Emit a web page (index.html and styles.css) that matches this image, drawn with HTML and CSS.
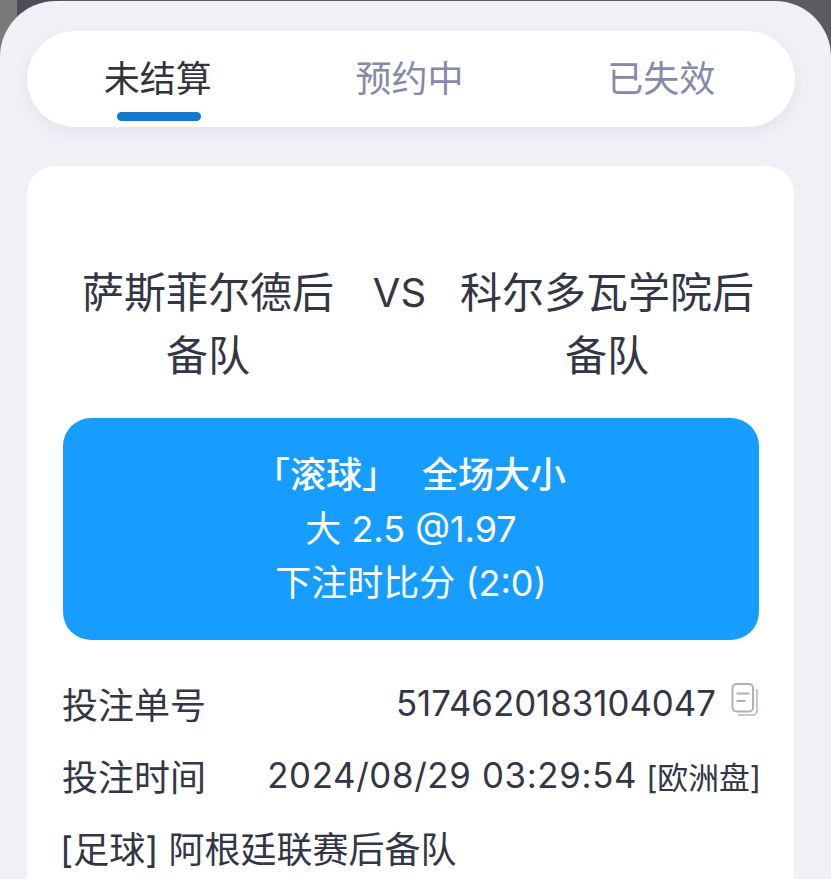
FILE: index.html
```html
<!DOCTYPE html>
<html lang="zh">
<head>
<meta charset="utf-8">
<title>注单</title>
<link rel="stylesheet" href="styles.css">
</head>
<body>
<div class="backdrop"></div>
<main class="sheet">
  <nav class="tabs">
    <div class="tab active">未结算<span class="bar"></span></div>
    <div class="tab">预约中</div>
    <div class="tab">已失效</div>
  </nav>
  <section class="card">
    <div class="teams">
      <div class="team">萨斯菲尔德后备队</div>
      <div class="vs">VS</div>
      <div class="team">科尔多瓦学院后备队</div>
    </div>
    <div class="bet">
      <div class="bet-title"><span>「滚球」</span><span>全场大小</span></div>
      <div>大 2.5 @1.97</div>
      <div>下注时比分 (2:0)</div>
    </div>
    <div class="row">
      <span class="label">投注单号</span>
      <span class="value">5174620183104047<svg class="copy" width="28" height="34" viewBox="0 0 28 34" fill="none"><path d="M26 6V28a4 4 0 0 1-4 4H7" stroke="#c6c9ce" stroke-width="2.200"/><rect x="1.500" y="1" width="20.500" height="27.500" rx="4" stroke="#aeb1b8" stroke-width="2" fill="#fff"/><path d="M5.500 10.500h13M5.500 18h9" stroke="#aeb1b8" stroke-width="1.800"/></svg></span>
    </div>
    <div class="row">
      <span class="label">投注时间</span>
      <span class="value"><span class="time">2024/08/29 03:29:54</span><span class="market">[欧洲盘]</span></span>
    </div>
    <div class="league">[足球] 阿根廷联赛后备队</div>
  </section>
</main>
</body>
</html>
```
FILE: styles.css
```css
* { box-sizing: border-box; }
html, body { margin: 0; height: 879px; overflow: hidden; }
body {
  position: relative;
  background: #5f6068;
  font-family: "Inter", "Noto Sans CJK SC", sans-serif;
  color: #333645;
}
.backdrop {
  position: absolute;
  inset: 0 0 auto 0;
  height: 60px;
  background: linear-gradient(90deg, #7a7a7c 0, #7a7a7c 17px, #4b4d5a 17px, #4b4d5a 60px, #5b5b60 60px, #5b5b60 100%);
}
.sheet {
  position: relative;
  height: 878px;
  padding: 30px 37px 0 27px;
  margin-top: 1px;
  background: #f0f0f6;
  border-radius: 56px 56px 0 0;
}
.tabs {
  display: grid;
  grid-template-columns: repeat(3, 1fr);
  width: 768px;
  height: 96px;
  padding: 0 8px 0 5px;
  border-radius: 48px;
  background: #fff;
  box-shadow: 0 6px 14px rgba(160, 165, 185, 0.16);
}
.tab {
  position: relative;
  text-align: center;
  font-size: 36px;
  line-height: 96px;
  color: #8589ab;
}
.tab.active { color: #33343a; }
.bar {
  position: absolute;
  left: 50%;
  bottom: 6px;
  width: 84px;
  height: 9px;
  margin-left: -41px;
  border-radius: 5px;
  background: #1578cc;
}
.card {
  width: 767px;
  height: 760px;
  margin-top: 39px;
  padding: 0 35px 0 36px;
  background: #fff;
  border-radius: 28px 28px 0 0;
}
.teams {
  display: grid;
  grid-template-columns: 290px 1fr 304px;
  padding-top: 96px;
  height: 252px;
  font-size: 42px;
  line-height: 62.5px;
  text-align: center;
  color: #333645;
}
.vs { padding-right: 9px; font-size: 40px; }
.bet {
  display: flex;
  flex-direction: column;
  align-items: center;
  justify-content: center;
  width: 696px;
  height: 222px;
  border-radius: 28px;
  background: #179dff;
  color: #fff;
  font-size: 36px;
  line-height: 54px;
}
.bet-title {
  display: flex;
  gap: 24px;
  padding-right: 2px;
  font-weight: 500;
}
.row {
  display: flex;
  justify-content: space-between;
  align-items: center;
  height: 72px;
  font-size: 36px;
  color: #333645;
}
.bet + .row { margin-top: 27px; }
.label { margin-left: -1px; }
.value { display: flex; align-items: center; font-size: 34.8px; }
.time { letter-spacing: 0.66px; }
.copy { margin-left: 15px; margin-top: -6px; }
.market { margin: 0 -2px 0 9px; font-size: 30.8px; }
.league { margin: 3px 0 0 -3px; font-size: 36px; line-height: 72px; }
```
